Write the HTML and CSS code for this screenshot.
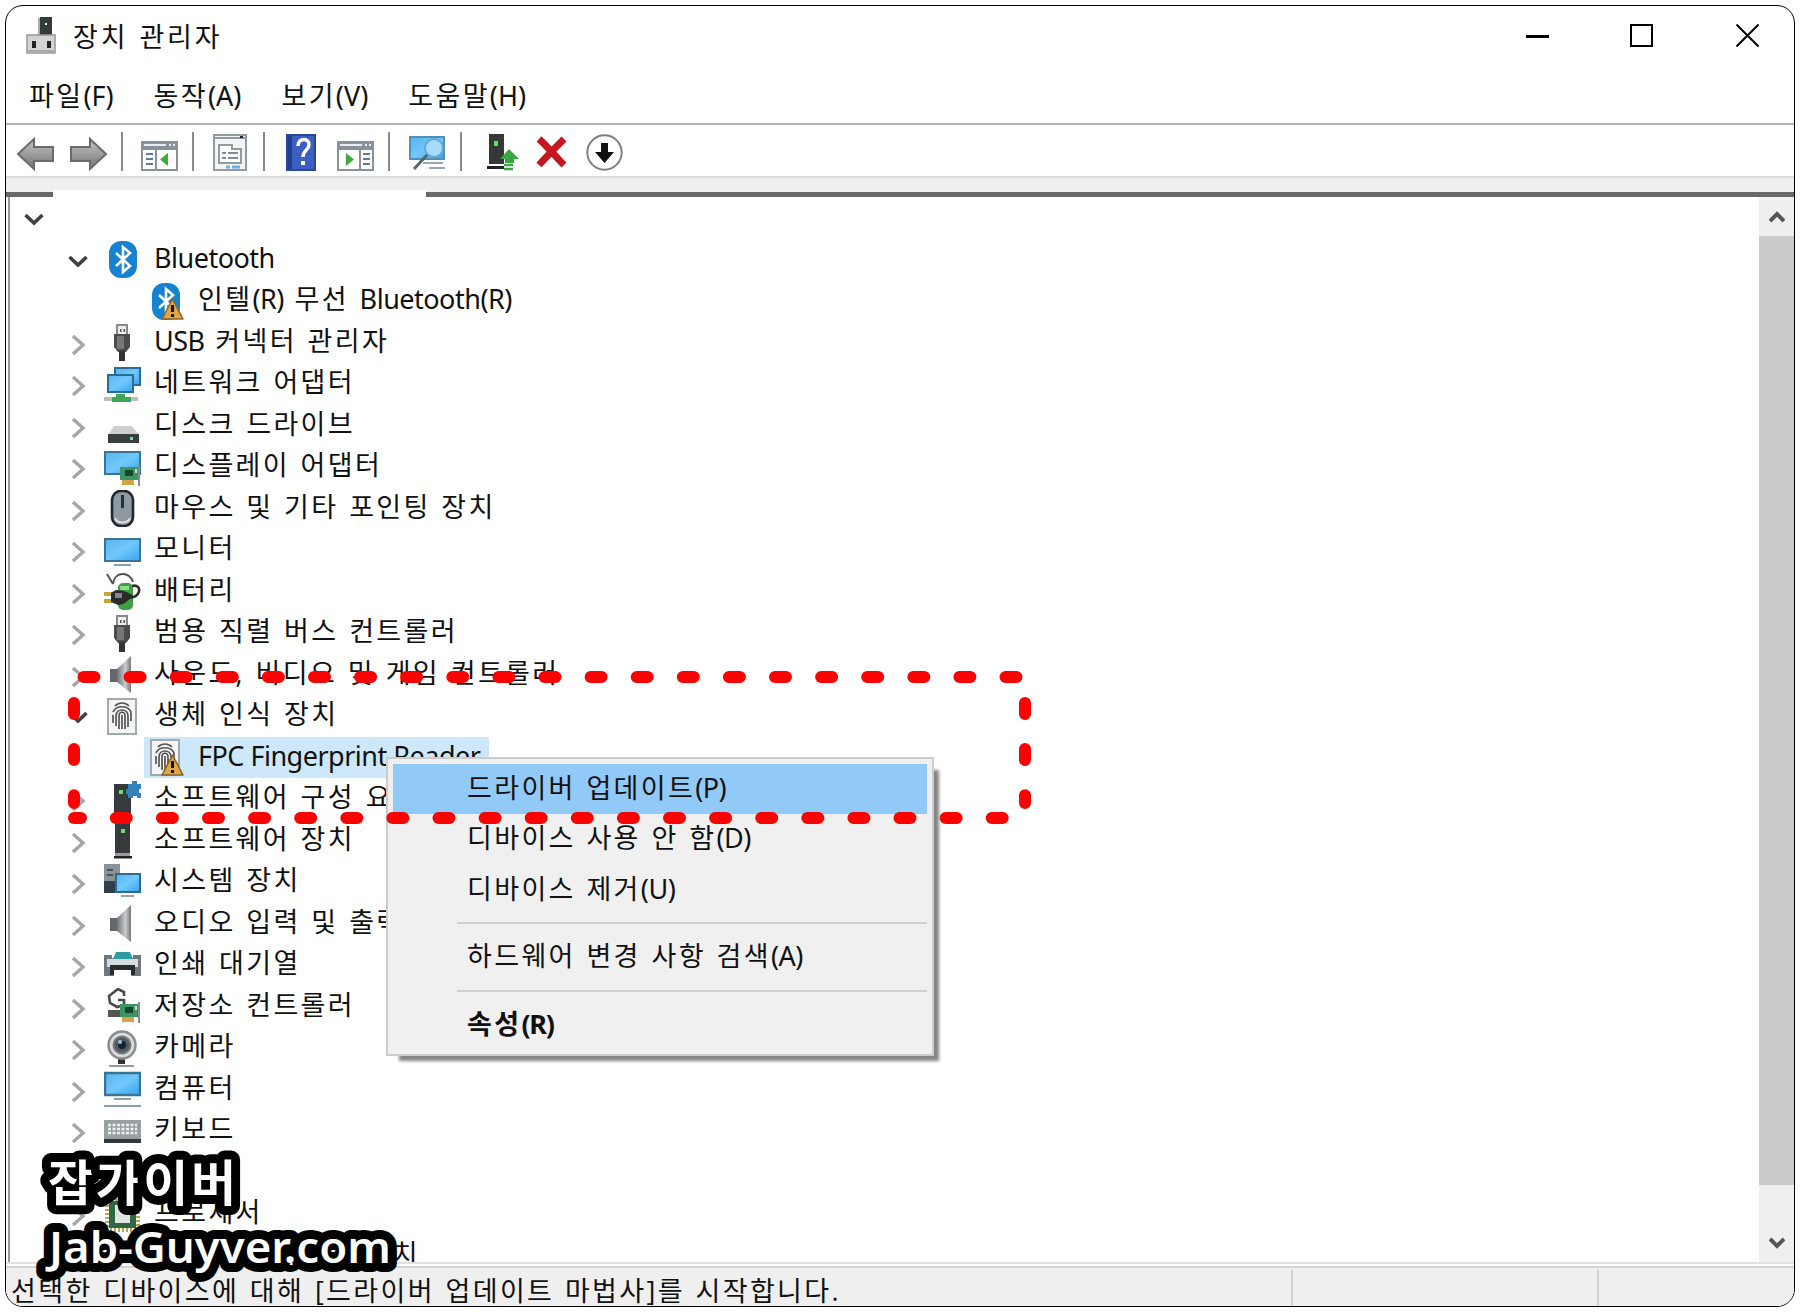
FILE: index.html
```
<!DOCTYPE html>
<html lang="ko">
<head>
  <meta charset="UTF-8">
  <title>장치 관리자</title>
  <meta name="viewport" content="width=device-width, initial-scale=1.0">
  <link rel="stylesheet" href="styles.css">
</head>
<body>
  <!-- Icon symbols -->
  <svg class="defs" width="0" height="0">
    <defs>
      <linearGradient id="screen" x1="0" y1="0" x2="1" y2="1">
        <stop offset="0" stop-color="#55b4ee"/>
        <stop offset=".5" stop-color="#72c8fb"/>
        <stop offset="1" stop-color="#35a3ec"/>
      </linearGradient>
      <linearGradient id="metal" x1="0" y1="0" x2="0" y2="1">
        <stop offset="0" stop-color="#c4c4c4"/>
        <stop offset="1" stop-color="#747474"/>
      </linearGradient>
      <linearGradient id="cone" x1="0" y1="0" x2="1" y2="0">
        <stop offset="0" stop-color="#6e7276"/>
        <stop offset=".6" stop-color="#c9cbce"/>
        <stop offset="1" stop-color="#777"/>
      </linearGradient>
    </defs>
    <symbol id="open" viewBox="0 0 20 14"><path d="M1.500 2l8.500 8 8.500-8" fill="none" stroke="#404040" stroke-width="3.600"/></symbol>
    <symbol id="closed" viewBox="0 0 20 22"><path d="M5 2l10 9-10 9" fill="none" stroke="#a6a6a6" stroke-width="3.400"/></symbol>
    <symbol id="bluetooth" viewBox="0 0 37 37">
      <rect x="5" y="0" width="28" height="37" rx="12" fill="#1583d2"/>
      <path d="M12 12l14 13-7 6V6l7 6-14 13" fill="none" stroke="#fff" stroke-width="2.600"/>
    </symbol>
    <symbol id="warn" viewBox="0 0 37 37">
      <path d="M25.500 16L15 36h21z" fill="#e0a544" stroke="#8a6630" stroke-width="1.600" stroke-linejoin="round"/>
      <path d="M25.500 22v7M25.500 31v3" stroke="#111" stroke-width="3"/>
    </symbol>
    <symbol id="usb" viewBox="0 0 37 37">
      <path d="M13 12V1h10v11" fill="#eee" stroke="#888" stroke-width="2"/>
      <path d="M16 5h1.500v3H16zM19.500 5H21v3h-1.500z" fill="#555"/>
      <path d="M10 10h16v13l-4 5H14l-4-5z" fill="#4b4b4b"/>
      <path d="M13 12h7v13h-7z" fill="#777"/>
      <path d="M15 27h6v10h-6z" fill="#333"/>
    </symbol>
    <symbol id="network" viewBox="0 0 37 37">
      <path d="M11 2h25v17H11z" fill="url(#screen)" stroke="#2b6c96" stroke-width="2"/>
      <path d="M4 9h25v17H4z" fill="url(#screen)" stroke="#2b6c96" stroke-width="2"/>
      <path d="M0 31h34v4H0z" fill="#b9c0bb"/>
      <path d="M12 28h9v3h6v5H8v-5h4z" fill="#3ea757"/>
    </symbol>
    <symbol id="disk" viewBox="0 0 37 37">
      <path d="M10 19h18l7 9H4z" fill="#cfcfcf"/>
      <rect x="4" y="27" width="31" height="9" fill="#3a3f3b"/>
      <rect x="26" y="30" width="3" height="3" fill="#6de884"/>
    </symbol>
    <symbol id="card" viewBox="0 0 37 37">
      <path d="M16 18h19v13H16z" fill="#3a9463"/>
      <path d="M21 21h8v6h-8z" fill="#164529"/>
      <path d="M31 20h2v4h-2z" fill="#bfe3ca"/>
      <path d="M35 16v21" stroke="#8a8a8a" stroke-width="2"/>
      <path d="M18 31h12v5H18z" fill="#d3a443"/>
    </symbol>
    <symbol id="display" viewBox="0 0 37 37">
      <path d="M1 3h35v22H1z" fill="url(#screen)" stroke="#3b7396" stroke-width="2"/>
      <use href="#card"/>
    </symbol>
    <symbol id="mouse" viewBox="0 0 37 37">
      <rect x="8" y="1" width="21" height="35" rx="9" fill="#8f99a2" stroke="#20262b" stroke-width="2.600"/>
      <path d="M11 28c2 6 13 6 15 0" fill="none" stroke="#dde2e6" stroke-width="2"/>
      <path d="M18.500 5v13" stroke="#2a2f33" stroke-width="3"/>
    </symbol>
    <symbol id="monitor" viewBox="0 0 37 37">
      <path d="M1 7h35v22H1z" fill="url(#screen)" stroke="#3b7396" stroke-width="2"/>
      <path d="M10 33h17" stroke="#8aa0ad" stroke-width="2"/>
    </symbol>
    <symbol id="battery" viewBox="0 0 37 37">
      <path d="M9 11C10-2 26-2 29 9M3 1l6 10" fill="none" stroke="#555" stroke-width="2"/>
      <rect x="14" y="10" width="15" height="27" rx="5" fill="#3f9f42"/>
      <path d="M16 13h9v4h-9z" fill="#8ad98a"/>
      <path d="M28 13c11-3 9 14-4 11" fill="none" stroke="#2b2b2b" stroke-width="2.600"/>
      <path d="M0 19h8v4H0zM0 26h8v4H0z" fill="#c8a33a"/>
      <path d="M7 20l5-3c8 0 12 3 17 5-5 6-9 10-15 10l-7-3z" fill="#2b2b2b"/>
      <path d="M11 20h7v5h-7z" fill="#888"/>
    </symbol>
    <symbol id="speaker" viewBox="0 0 37 37">
      <path d="M6 13h7v13H6z" fill="#63676b"/>
      <path d="M13 13L27 0v37L13 26z" fill="url(#cone)"/>
    </symbol>
    <symbol id="finger" viewBox="0 0 37 37">
      <rect x="4" y="1" width="28" height="35" fill="#f4f6f6" stroke="#a3aaac" stroke-width="2"/>
      <g fill="none" stroke="#555" stroke-width="1.700">
        <path d="M11 8c4-4 10-4 14 0M9 14c3-7 15-7 18 0v9M9 17v8M12 28V18c0-8 12-8 12 0v11M15 31V18c0-5 6-5 6 0v13M18 17v14"/>
      </g>
    </symbol>
    <symbol id="tower" viewBox="0 0 37 37">
      <path d="M11 1h15v30H11z" fill="#363a3c"/>
      <path d="M17 7h4v4h-4z" fill="#65e06b"/>
      <path d="M11 31h15v3H11z" fill="#9a9a9a"/>
      <path d="M10 34h18v2.500H10z" fill="#222"/>
    </symbol>
    <symbol id="component" viewBox="0 0 37 37">
      <path d="M10 3h17v30H10z" fill="#363a3c"/>
      <path d="M15 9h4v4h-4z" fill="#65e06b"/>
      <path d="M24 3h4V0h5v3h4v5h-2v4h2v5h-4v-2h-4v2h-5v-4h-2V8h2z" fill="#3484bb"/>
    </symbol>
    <symbol id="system" viewBox="0 0 37 37">
      <path d="M0 0h16v29H0z" fill="#8b9397"/>
      <path d="M3 5h6v2H3zM3 10h6v2H3z" fill="#49545a"/>
      <path d="M0 17h11v12H0z" fill="#2e3f4c"/>
      <path d="M12 10h24v18H12z" fill="url(#screen)" stroke="#2f6a90" stroke-width="2"/>
      <path d="M17 32h13" stroke="#90a5b0" stroke-width="2"/>
    </symbol>
    <symbol id="printer" viewBox="0 0 37 37">
      <path d="M0 8h8v3h21V8h8v21H0z" fill="#70787d"/>
      <path d="M3 12h31v8H3z" fill="#d7dcdf"/>
      <path d="M12 5h14l3 7H9z" fill="#2b9ca4"/>
      <path d="M6 18h25v10H6z" fill="#292d30"/>
      <path d="M10 23h17v7H10z" fill="#fff"/>
    </symbol>
    <symbol id="storage" viewBox="0 0 37 37">
      <path d="M20 8V4l-6-3-9 7 1 7 7 4 7-2v-5h-6" fill="none" stroke="#4a4a4a" stroke-width="2.600"/>
      <path d="M4 22h12v7H4z" fill="#555"/>
      <use href="#card" y="-2"/>
    </symbol>
    <symbol id="camera" viewBox="0 0 37 37">
      <path d="M14 28h7v6h-7z" fill="#333"/>
      <path d="M5 36h25" stroke="#999" stroke-width="2"/>
      <circle cx="18" cy="15" r="13.500" fill="#d9dbdc" stroke="#8a8d8f" stroke-width="2.500"/>
      <circle cx="18" cy="15" r="8.500" fill="#4e5a66" stroke="#777" stroke-width="2"/>
      <circle cx="18" cy="15" r="4" fill="#16222e"/>
      <circle cx="16" cy="12" r="2" fill="#9fc3dd"/>
    </symbol>
    <symbol id="computer" viewBox="0 0 37 37">
      <path d="M1 2h35v22H1z" fill="url(#screen)" stroke="#3b7396" stroke-width="2.400"/>
      <path d="M10 28h17M0 35h37" stroke="#8aa0ad" stroke-width="2"/>
    </symbol>
    <symbol id="keyboard" viewBox="0 0 37 37">
      <path d="M0 7h37v20H0z" fill="#9a9fa3"/>
      <path d="M4 12h29M4 16h29M4 20h29" stroke="#eef1f3" stroke-width="2.500" stroke-dasharray="3 1.500"/>
      <path d="M0 26h37v4H0z" fill="#33373a"/>
    </symbol>
    <symbol id="cpu" viewBox="0 0 37 37">
      <rect x="3" y="3" width="31" height="31" fill="none" stroke="#b4a94e" stroke-width="4" stroke-dasharray="2 2"/>
      <rect x="5" y="5" width="27" height="27" fill="#2f6846"/>
      <rect x="11" y="9" width="15" height="18" fill="#dfe5e2"/>
    </symbol>
  </svg>

  <div class="window">
    <div class="titlebar">
      <svg class="app-icon" viewBox="0 0 30 37">
        <path d="M14 0h12v20H14z" fill="#343b35"/>
        <path d="M13 1v17" stroke="#aaa" stroke-width="2"/>
        <rect x="19" y="6" width="2" height="2" fill="#dfe"/>
        <path d="M1 18h28v18H1z" fill="#d3d3d6" stroke="#98989c" stroke-width="1.500"/>
        <path d="M1 33h28v3H1z" fill="#a9a9a9"/>
        <path d="M6 24h4v7H6zM21 24h4v7h-4z" fill="#222"/>
      </svg>
      <span class="title">장치 관리자</span>
      <svg class="caption-buttons" viewBox="0 0 233 23" fill="none" stroke="#000">
        <path d="M0 12.500h23" stroke-width="3"/>
        <rect x="105" y="1" width="21" height="21" stroke-width="2"/>
        <path d="M210.500 .5l22 22M232.500 .5l-22 22" stroke-width="2"/>
      </svg>
    </div>

    <div class="menubar">
      <span>파일<i>(F)</i></span>
      <span>동작<i>(A)</i></span>
      <span>보기<i>(V)</i></span>
      <span>도움말<i>(H)</i></span>
    </div>

    <div class="toolbar">
      <svg class="back" width="37" height="34" viewBox="0 0 37 34"><path d="M1 17L17 2v8h19v14H17v8z" fill="url(#metal)" stroke="#6b6b6b" stroke-width="2"/></svg>
      <svg class="forward" width="37" height="34" viewBox="0 0 37 34"><path d="M36 17L20 2v8H1v14h19v8z" fill="url(#metal)" stroke="#6b6b6b" stroke-width="2"/></svg>
      <span class="sep"></span>
      <svg class="pane" width="37" height="37" viewBox="0 0 37 37">
        <path d="M1 8h35v28H1z" fill="#fff" stroke="#87929c" stroke-width="2"/>
        <path d="M1 8h35v8H1z" fill="#87929c"/><path d="M3 11h22M28 11h2M32 11h2" stroke="#e8edf0" stroke-width="2"/>
        <path d="M15 16v20" stroke="#87929c" stroke-width="2"/>
        <path d="M5 20h7M5 25h7M5 30h7" stroke="#5b7d99" stroke-width="2"/>
        <path d="M27 19v13l-8-6.500z" fill="#3dab37"/>
      </svg>
      <span class="sep"></span>
      <svg class="props" width="34" height="37" viewBox="0 0 34 37">
        <path d="M1 1h32v35H1z" fill="#f4f5f6" stroke="#929aa2" stroke-width="2"/>
        <path d="M2 4h30" stroke="#929aa2" stroke-width="2"/><path d="M27 3h3" stroke="#222" stroke-width="2"/>
        <path d="M6 11h13v4h9v14H6z" fill="#fff" stroke="#929aa2" stroke-width="2"/>
        <path d="M9 19h4M15 19h10M9 24h4M15 24h10" stroke="#7d8c99" stroke-width="2"/>
        <path d="M13 33h4M19 33h8" stroke="#65b6e2" stroke-width="3"/>
      </svg>
      <span class="sep"></span>
      <svg class="help" width="30" height="37" viewBox="0 0 30 37">
        <path d="M0 0h30v37H0z" fill="#3c5fc1"/><path d="M0 0h6v37H0z" fill="#223f91"/><path d="M1 1h28v35H1z" fill="none" stroke="#2a479b" stroke-width="2"/>
        <path d="M12 12c0-9 12-8 11-1 0 5-6 5-6 12" fill="none" stroke="#fff" stroke-width="3.500"/><path d="M15 27h4v4h-4z" fill="#fff"/>
      </svg>
      <svg class="action" width="37" height="37" viewBox="0 0 37 37">
        <path d="M1 8h35v28H1z" fill="#fff" stroke="#87929c" stroke-width="2"/>
        <path d="M1 8h35v8H1z" fill="#87929c"/><path d="M3 11h22M28 11h2M32 11h2" stroke="#e8edf0" stroke-width="2"/>
        <path d="M23 16v20" stroke="#87929c" stroke-width="2"/>
        <path d="M26 20h7M26 25h7M26 30h7" stroke="#5b7d99" stroke-width="2"/>
        <path d="M9 19v13l8-6.500z" fill="#3dab37"/>
      </svg>
      <span class="sep"></span>
      <svg class="scan" width="37" height="37" viewBox="0 0 37 37">
        <path d="M1 3h34v22H1z" fill="url(#screen)" stroke="#4e90b7" stroke-width="2"/>
        <path d="M14 29h20M20 34h16" stroke="#96a8b3" stroke-width="2"/>
        <circle cx="25" cy="14" r="9" fill="#a5dcfa" stroke="#67a7cd" stroke-width="2"/>
        <path d="M18 21L5 35" stroke="#58646b" stroke-width="3"/>
      </svg>
      <span class="sep"></span>
      <svg class="update" width="32" height="37" viewBox="0 0 32 37">
        <path d="M2 0h15v30H2z" fill="#343837"/><path d="M7 7h4v5H7z" fill="#5be15c"/><path d="M0 32h17v3H0z" fill="#222"/>
        <path d="M22 15l10 10h-5v4h-9v-4h-5z" fill="#36a743"/><path d="M17 31h9M17 35h9" stroke="#36a743" stroke-width="2.500"/>
      </svg>
      <svg class="remove" width="33" height="33" viewBox="0 0 33 33"><path d="M4 3c8 7 15 16 25 26M29 3C20 12 12 20 4 29" fill="none" stroke="#c4171f" stroke-width="7"/></svg>
      <svg class="disable" width="37" height="37" viewBox="0 0 37 37"><circle cx="18.500" cy="18.500" r="17.200" fill="#fff" stroke="#808080" stroke-width="2"/><path d="M15 9h7v9h6l-9.500 11L9 18h6z" fill="#111"/></svg>
    </div>

    <div class="band"><span></span></div>

    <div class="main">
      <div class="tree">
        <div class="row root"><svg class="arrow open"><use href="#open"/></svg></div>
        <div class="row"><svg class="arrow open"><use href="#open"/></svg><svg class="icon"><use href="#bluetooth"/></svg><i>Bluetooth</i></div>
        <div class="row child"><svg class="icon"><use href="#bluetooth"/><use href="#warn"/></svg>인텔<i>(R)</i> 무선 <i>Bluetooth(R)</i></div>
        <div class="row"><svg class="arrow"><use href="#closed"/></svg><svg class="icon"><use href="#usb"/></svg><i>USB</i> 커넥터 관리자</div>
        <div class="row"><svg class="arrow"><use href="#closed"/></svg><svg class="icon"><use href="#network"/></svg>네트워크 어댑터</div>
        <div class="row"><svg class="arrow"><use href="#closed"/></svg><svg class="icon"><use href="#disk"/></svg>디스크 드라이브</div>
        <div class="row"><svg class="arrow"><use href="#closed"/></svg><svg class="icon"><use href="#display"/></svg>디스플레이 어댑터</div>
        <div class="row"><svg class="arrow"><use href="#closed"/></svg><svg class="icon"><use href="#mouse"/></svg>마우스 및 기타 포인팅 장치</div>
        <div class="row"><svg class="arrow"><use href="#closed"/></svg><svg class="icon"><use href="#monitor"/></svg>모니터</div>
        <div class="row"><svg class="arrow"><use href="#closed"/></svg><svg class="icon"><use href="#battery"/></svg>배터리</div>
        <div class="row"><svg class="arrow"><use href="#closed"/></svg><svg class="icon"><use href="#usb"/></svg>범용 직렬 버스 컨트롤러</div>
        <div class="row"><svg class="arrow"><use href="#closed"/></svg><svg class="icon"><use href="#speaker"/></svg>사운드, 비디오 및 게임 컨트롤러</div>
        <div class="row"><svg class="arrow open"><use href="#open"/></svg><svg class="icon"><use href="#finger"/></svg>생체 인식 장치</div>
        <div class="row child selected"><svg class="icon"><use href="#finger"/><use href="#warn"/></svg><i>FPC Fingerprint Reader</i></div>
        <div class="row"><svg class="arrow"><use href="#closed"/></svg><svg class="icon"><use href="#component"/></svg>소프트웨어 구성 요소</div>
        <div class="row"><svg class="arrow"><use href="#closed"/></svg><svg class="icon"><use href="#tower"/></svg>소프트웨어 장치</div>
        <div class="row"><svg class="arrow"><use href="#closed"/></svg><svg class="icon"><use href="#system"/></svg>시스템 장치</div>
        <div class="row"><svg class="arrow"><use href="#closed"/></svg><svg class="icon"><use href="#speaker"/></svg>오디오 입력 및 출력</div>
        <div class="row"><svg class="arrow"><use href="#closed"/></svg><svg class="icon"><use href="#printer"/></svg>인쇄 대기열</div>
        <div class="row"><svg class="arrow"><use href="#closed"/></svg><svg class="icon"><use href="#storage"/></svg>저장소 컨트롤러</div>
        <div class="row"><svg class="arrow"><use href="#closed"/></svg><svg class="icon"><use href="#camera"/></svg>카메라</div>
        <div class="row"><svg class="arrow"><use href="#closed"/></svg><svg class="icon"><use href="#computer"/></svg>컴퓨터</div>
        <div class="row"><svg class="arrow"><use href="#closed"/></svg><svg class="icon"><use href="#keyboard"/></svg>키보드</div>
        <div class="row"></div>
        <div class="row"><svg class="arrow"><use href="#closed"/></svg><svg class="icon"><use href="#cpu"/></svg>프로세서</div>
        <div class="row"><svg class="arrow"></svg><svg class="icon"></svg>휴먼 인터페이스 장치</div>
      </div>
      <div class="scrollbar">
        <svg class="scroll-arrow" viewBox="0 0 16 14"><path d="M1 11l7-7 7 7" fill="none" stroke="#555" stroke-width="4"/></svg>
        <div class="thumb"></div>
        <svg class="scroll-arrow down" viewBox="0 0 16 14"><path d="M1 3l7 7 7-7" fill="none" stroke="#555" stroke-width="4"/></svg>
      </div>
    </div>

    <div class="statusbar">
      <div class="status-text">선택한 디바이스에 대해 [드라이버 업데이트 마법사]를 시작합니다.</div>
      <div class="status-cell"></div>
      <div class="status-cell last"></div>
    </div>
  </div>

  <div class="context-menu">
    <div class="item active">드라이버 업데이트<i>(P)</i></div>
    <div class="item">디바이스 사용 안 함<i>(D)</i></div>
    <div class="item">디바이스 제거<i>(U)</i></div>
    <div class="divider"></div>
    <div class="item">하드웨어 변경 사항 검색<i>(A)</i></div>
    <div class="divider"></div>
    <div class="item default">속성<i>(R)</i></div>
  </div>

  <!-- Dashed highlight box -->
  <svg class="highlight" width="964" height="154" viewBox="0 0 964 154">
    <g fill="none" stroke="#fd0000" stroke-width="12" stroke-linecap="round" stroke-dasharray="11 35.100">
      <path d="M15.500 6H960"/>
      <path d="M47.800 147H942"/>
      <path d="M6 32v100"/>
      <path d="M957 32v100"/>
      <path d="M6 147h7"/>
    </g>
  </svg>

  <svg class="watermark" width="400" height="150" viewBox="0 0 400 150">
    <text class="name" x="18" y="56" textLength="188">잡가이버</text>
    <text class="site" x="19" y="118" textLength="342" lengthAdjust="spacingAndGlyphs">Jab-Guyver.com</text>
  </svg>
</body>
</html>
```
FILE: styles.css
```
* {
  box-sizing: border-box;
}
body {
  margin: 0;
  padding: 5px;
  height: 1312px;
  overflow: hidden;
  background: #fff;
  color: #111;
  font-family: "Open Sans", "Noto Sans CJK KR", sans-serif;
  font-size: 27px;
  letter-spacing: 2.35px;
  word-spacing: 1.3px;
  white-space: nowrap;
}
/* latin runs */
i {
  font-family: "Noto Sans", sans-serif;
  font-style: normal;
  font-size: 27px;
  letter-spacing: -0.5px;
  word-spacing: 0;
}
svg {
  display: block;
  flex: none;
}
.defs {
  position: absolute;
}
.window {
  width: 1790px;
  height: 1302px;
  display: flex;
  flex-direction: column;
  border: 1px solid #000;
  border-radius: 18px;
  overflow: hidden;
  background: #fff;
}

/* title and menu */
.titlebar {
  display: flex;
  align-items: center;
  height: 60px;
  padding: 0 35px 2px 20px;
}
.app-icon {
  width: 30px;
  height: 37px;
}
.title {
  margin-left: 17px;
  letter-spacing: 2.8px;
}
.caption-buttons {
  width: 233px;
  height: 23px;
  margin-left: auto;
}
.menubar {
  display: flex;
  align-items: center;
  gap: 40px;
  height: 57px;
  padding: 3px 0 0 23px;
  line-height: 40px;
}
.menubar i {
  letter-spacing: 0;
}

/* toolbar */
.toolbar {
  display: flex;
  align-items: flex-end;
  height: 55px;
  padding: 0 0 5px 11px;
  border-top: 2px solid #b4b4b4;
  border-bottom: 2px solid #dcdcdc;
}
.sep {
  width: 2px;
  height: 39px;
  background: #8a8a8a;
}
.forward {
  margin: 0 14px 0 16px;
}
.pane {
  margin: 0 14px 0 18px;
}
.props {
  margin: 0 16px 0 19px;
}
.help {
  margin: 0 21px 0 21px;
}
.action {
  margin-right: 14px;
}
.scan {
  margin: 0 14px 0 19px;
}
.update {
  margin: 0 16px 0 25px;
}
.remove {
  margin: 0 18px 2px 0;
}
.band {
  height: 19px;
  background: #efefef;
  border-bottom: 5px solid #686868;
}
.band span {
  display: block;
  width: 373px;
  height: 7px;
  margin: 12px 0 0 47px;
  background: #fff;
}

/* device tree */
.main {
  display: flex;
  flex: 1;
  min-height: 0;
  padding-left: 2px;
}
.tree {
  flex: 1;
  border-left: 2px solid #9a9797;
}
.row {
  display: flex;
  align-items: center;
  height: 41.5px;
  padding: 0 0 4px 58px;
  line-height: 37px;
  white-space: pre;
}
.root {
  padding-left: 14px;
}
.arrow {
  width: 20px;
  height: 22px;
  margin-top: 9px;
}
.arrow.open {
  height: 14px;
}
.icon {
  width: 37px;
  height: 37px;
  margin: 5px 13px 0 16px;
}
.child {
  width: 345px;
  margin-left: 134px;
  padding-left: 3px;
}
.child .icon {
  margin: 5px 14px 0 0;
}
.selected {
  background: #cde8fa;
}
.scrollbar {
  display: flex;
  flex-direction: column;
  align-items: center;
  width: 35px;
  background: #efefef;
}
.scroll-arrow {
  width: 16px;
  height: 14px;
  margin: 13px 0 12px;
}
.thumb {
  width: 100%;
  height: 949px;
  background: #cbcbcb;
}
.down {
  margin: auto 0 12px;
}

/* status bar */
.statusbar {
  display: flex;
  height: 44px;
  border-top: 2px solid #e1e1e1;
  background: linear-gradient(#fff 2px, #d5d5d5 2px, #d5d5d5 4px, #efefef 4px);
  padding-top: 6px;
}
.status-text {
  width: 1285px;
  padding-left: 5px;
  line-height: 42px;
  height: 38px;
}
.status-cell {
  width: 306px;
  border-left: 2px solid #d2d2d2;
}
.last {
  flex: 1;
}

/* popup over the tree */
.context-menu {
  position: absolute;
  left: 386px;
  top: 757px;
  width: 548px;
  height: 299px;
  padding: 5px;
  border: 2px solid #ccc;
  background: #f0f0f0;
  box-shadow: 9px 9px 3px -4px #858585;
}
.item {
  height: 50.4px;
  padding-left: 74px;
  line-height: 48px;
}
.active {
  background: #91c9f7;
}
.default, .default i {
  font-weight: bold;
}
.default i {
  letter-spacing: -1.2px;
}
.divider {
  height: 2px;
  margin: 7px 0 8px 64px;
  background: #d0d0d0;
}
.highlight {
  position: absolute;
  left: 68px;
  top: 671px;
}
.watermark {
  position: absolute;
  left: 30px;
  top: 1145px;
  fill: #fff;
  stroke: #000;
  stroke-width: 18px;
  stroke-linejoin: round;
  paint-order: stroke;
  font-family: "Noto Sans", "Noto Sans CJK KR", sans-serif;
  font-weight: 600;
  letter-spacing: 0;
}
.name {
  font-size: 49px;
}
.site {
  font-size: 44px;
}
```
